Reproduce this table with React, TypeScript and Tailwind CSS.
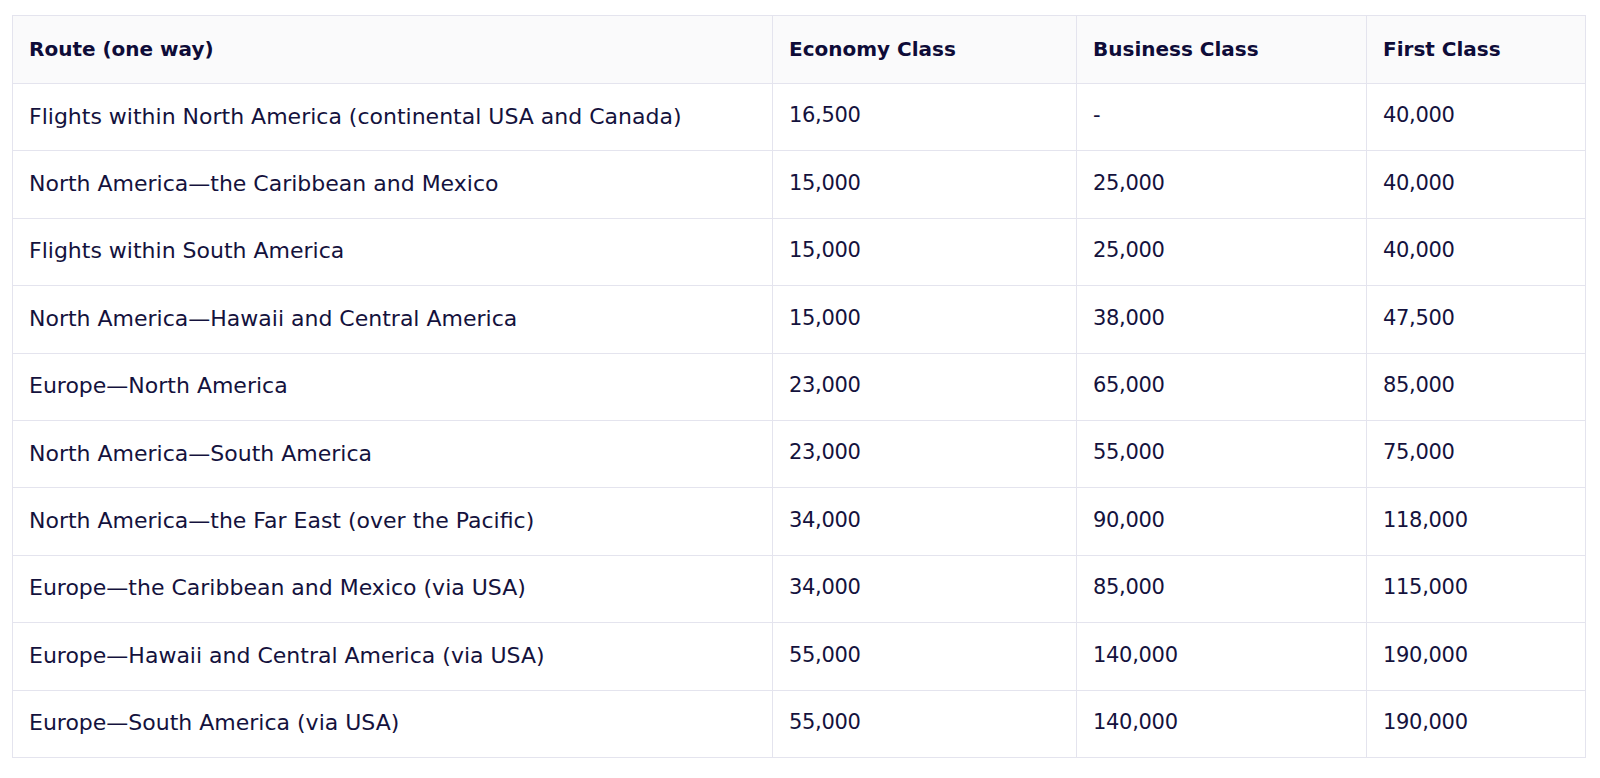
import React from "react";

const rows: [string, string, string, string][] = [
  ["Flights within North America (continental USA and Canada)", "16,500", "-", "40,000"],
  ["North America\u2014the Caribbean and Mexico", "15,000", "25,000", "40,000"],
  ["Flights within South America", "15,000", "25,000", "40,000"],
  ["North America\u2014Hawaii and Central America", "15,000", "38,000", "47,500"],
  ["Europe\u2014North America", "23,000", "65,000", "85,000"],
  ["North America\u2014South America", "23,000", "55,000", "75,000"],
  ["North America\u2014the Far East (over the Pacific)", "34,000", "90,000", "118,000"],
  ["Europe\u2014the Caribbean and Mexico (via USA)", "34,000", "85,000", "115,000"],
  ["Europe\u2014Hawaii and Central America (via USA)", "55,000", "140,000", "190,000"],
  ["Europe\u2014South America (via USA)", "55,000", "140,000", "190,000"],
];

export default function App() {
  return (
    <div className="min-h-screen bg-white pt-[15px] pl-[12px]" style={{ fontFamily: '"DejaVu Sans", "Liberation Sans", sans-serif' }}>
      <table className="w-[1573px] table-fixed border-collapse text-[#14123d]">
        <colgroup>
          <col className="w-[760px]" />
          <col className="w-[304px]" />
          <col className="w-[290px]" />
          <col className="w-[219px]" />
        </colgroup>
        <thead>
          <tr className="h-[68px] bg-[#fafafb]">
            {["Route (one way)", "Economy Class", "Business Class", "First Class"].map((h) => (
              <th key={h} className="border border-[#e4e4ee] px-4 pb-[2px] text-left align-middle text-[20px] font-bold text-[#0e0c38]">
                {h}
              </th>
            ))}
          </tr>
        </thead>
        <tbody>
          {rows.map((r, i) => (
            <tr key={i} className="h-[67.4px]">
              {r.map((c, j) => (
                <td
                  key={j}
                  className={
                    j === 0
                      ? "border border-[#e4e4ee] px-4 pb-[2px] align-middle text-[22px] font-normal"
                      : "border border-[#e4e4ee] px-4 pb-[2px] align-middle text-[21px] tracking-[-0.3px] font-normal"
                  }
                >
                  {c}
                </td>
              ))}
            </tr>
          ))}
        </tbody>
      </table>
    </div>
  );
}
